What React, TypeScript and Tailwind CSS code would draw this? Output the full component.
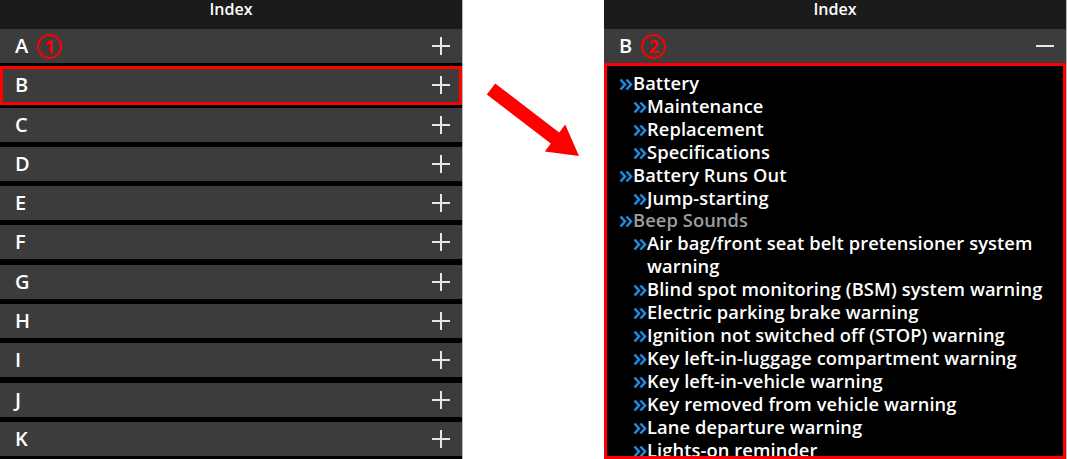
import React from 'react'

const letters = ['A', 'B', 'C', 'D', 'E', 'F', 'G', 'H', 'I', 'J', 'K']

const entries: { level: 1 | 2; text: string; dim?: boolean }[] = [
  { level: 1, text: 'Battery' },
  { level: 2, text: 'Maintenance' },
  { level: 2, text: 'Replacement' },
  { level: 2, text: 'Specifications' },
  { level: 1, text: 'Battery Runs Out' },
  { level: 2, text: 'Jump-starting' },
  { level: 1, text: 'Beep Sounds', dim: true },
  { level: 2, text: 'Air bag/front seat belt pretensioner system warning' },
  { level: 2, text: 'Blind spot monitoring (BSM) system warning' },
  { level: 2, text: 'Electric parking brake warning' },
  { level: 2, text: 'Ignition not switched off (STOP) warning' },
  { level: 2, text: 'Key left-in-luggage compartment warning' },
  { level: 2, text: 'Key left-in-vehicle warning' },
  { level: 2, text: 'Key removed from vehicle warning' },
  { level: 2, text: 'Lane departure warning' },
  { level: 2, text: 'Lights-on reminder' },
]

function Plus() {
  return (
    <svg width="18" height="18" viewBox="0 0 18 18" className="shrink-0">
      <path d="M9 0v18M0 9h18" stroke="#e6e6e6" strokeWidth="2" />
    </svg>
  )
}

function Minus() {
  return (
    <svg width="18" height="4" viewBox="0 0 18 4" className="shrink-0">
      <path d="M0 2h18" stroke="#e6e6e6" strokeWidth="2" />
    </svg>
  )
}

function Chevrons() {
  return (
    <svg width="14" height="13" viewBox="0 0 14 13" className="mt-[6px] shrink-0">
      <path d="M1.5 1.5L6 6.5L1.5 11.5M7.5 1.5L12 6.5L7.5 11.5" fill="none" stroke="#1e8be0" strokeWidth="2.6" />
    </svg>
  )
}

function Badge({ n }: { n: number }) {
  return (
    <span className="ml-[9px] flex h-[25px] w-[25px] items-center justify-center rounded-full border-2 border-[#f00] text-[18px] font-bold leading-none text-[#f00]">
      {n}
    </span>
  )
}

function Header() {
  return (
    <div className="h-[29px] shrink-0 bg-[#1b1b1b] pt-[1px] text-center text-[16px] font-semibold leading-[16px] text-white">
      Index
    </div>
  )
}

function LetterRow({ letter, badge, open }: { letter: string; badge?: number; open?: boolean }) {
  return (
    <div className="flex h-[34px] shrink-0 items-center bg-[#3c3c3c] pl-[15px] pr-[12px]">
      <span className="text-[20px] font-semibold text-white">{letter}</span>
      {badge && <Badge n={badge} />}
      <div className="flex-1" />
      {open ? <Minus /> : <Plus />}
    </div>
  )
}

export default function App() {
  return (
    <div
      className="flex h-[459px] w-[1067px] overflow-hidden bg-white"
      style={{ fontFamily: '"Open Sans", "Liberation Sans", sans-serif' }}
    >
      {/* index closed */}
      <div className="flex w-[463px] shrink-0 flex-col border-r border-[#b8b8b8] bg-black">
        <Header />
        <div className="flex flex-col gap-[5.3px]">
          {letters.map((l) => (
            <div key={l} className="relative">
              <LetterRow letter={l} badge={l === 'A' ? 1 : undefined} />
              {l === 'B' && (
                <div className="absolute -bottom-[3px] -top-[2px] left-0 right-0 border-[3px] border-[#f00]" />
              )}
            </div>
          ))}
        </div>
      </div>

      {/* arrow */}
      <div className="w-[141px] shrink-0">
        <svg width="141" height="200" viewBox="0 0 141 200">
          <polygon
            points="32.2,83.4 96.2,132.4 102.2,124.4 116,156 81.8,151.6 87.8,143.6 23.8,94.6"
            fill="#f00"
          />
        </svg>
      </div>

      {/* index open on B */}
      <div className="flex w-[463px] shrink-0 flex-col border-r border-[#b8b8b8] bg-black">
        <Header />
        <LetterRow letter="B" badge={2} open />
        <div className="min-h-0 flex-1 overflow-hidden border-[3px] border-[#f00] bg-black pt-[6px] pl-[12px] pr-[8px]">
          {entries.map((e, i) => (
            <div
              key={i}
              className={`flex text-[18.3px] font-semibold leading-[22.9px] tracking-[0.1px] ${e.level === 2 ? 'pl-[14px]' : ''} ${e.dim ? 'text-[#9d9d9d]' : 'text-white'}`}
            >
              <Chevrons />
              <span>{e.text}</span>
            </div>
          ))}
        </div>
      </div>
    </div>
  )
}
